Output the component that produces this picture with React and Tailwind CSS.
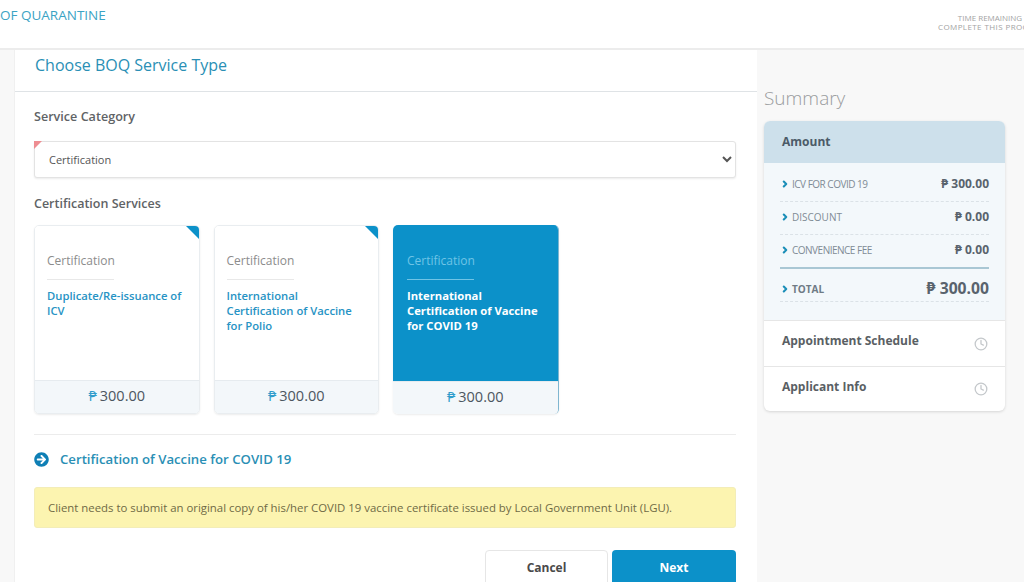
import React from 'react';
import { ChevronRight, Clock } from 'lucide-react';
import { FaArrowCircleRight } from 'react-icons/fa';

const font = "font-['Open_Sans','Noto_Sans',sans-serif]";

const services = [
  { id: 1, name: 'Duplicate/Re-issuance of ICV' },
  { id: 2, name: 'International Certification of Vaccine for Polio' },
  { id: 3, name: 'International Certification of Vaccine for COVID 19', active: true },
];

const ServiceCard = ({ name, active }) => (
  <div className={`relative w-[165.5px] h-[189px] flex flex-col rounded-[5px] overflow-hidden border border-[#e9edf0] ${active ? 'border-0 border-r border-r-[#7fb6d0]' : ''} shadow-[0_1px_2px_rgba(0,0,0,0.08)]`}>
    {!active && (
      <div className="absolute top-0 right-0 w-0 h-0 border-l-[13px] border-l-transparent border-t-[13px] border-t-[#0c91c9]" />
    )}
    <div className={`flex-1 ${active ? 'bg-[#0c91c9] pl-[14px] pr-[10px] pt-[28px]' : 'bg-white px-[12px] pt-[27px]'}`}>
      <p className={`text-[12px] leading-[16px] ${active ? 'text-[#6fc4e6]' : 'text-[#8c8c8c]'}`}>Certification</p>
      <div className={`w-[67px] h-px mt-[10px] mb-[8px] ${active ? 'bg-[#6fc4e6]' : 'bg-[#e8e8e8]'}`} />
      <p className={`text-[11.25px] leading-[15px] ${active ? 'font-bold text-white' : 'font-semibold text-[#2793c4]'}`}>{name}</p>
    </div>
    <div className="h-[33px] shrink-0 pb-[2px] flex items-center justify-center bg-[#f3f7fa] border-t border-[#e6ebef] text-[14.5px] text-[#4c5660]">
      <span className="text-[#2f9ccb] mr-[3px]">₱</span>300.00
    </div>
  </div>
);

const SummaryRow = ({ label, value, border = 'border-b border-dashed border-[#dbe2e7]', labelClass = 'text-[10px] tracking-[-0.5px] text-[#7f8b95]', valueClass = 'text-[12px]', rowClass = 'h-[33px] pb-[2px]' }) => (
  <div className={`flex items-center justify-between ${rowClass} ${border}`}>
    <div className="flex items-center gap-[2px]">
      <ChevronRight size={10} strokeWidth={5} className="text-[#1c8fb8]" />
      <span className={labelClass}>{label}</span>
    </div>
    <span className={`font-bold text-[#59636d] ${valueClass}`}>₱ {value}</span>
  </div>
);

export default function App() {
  return (
    <div className={`h-[582px] overflow-hidden bg-[#f8f8f8] ${font}`}>
      <header className="h-[50px] bg-white border-b-2 border-[#ececec] flex justify-between overflow-hidden">
        <span className="text-[13.5px] leading-[18px] mt-[6px] text-[#3ba3c4]">OF QUARANTINE</span>
        <div className="w-[104px] shrink-0 -mr-[18px] mt-[13px] text-center text-[8px] leading-[9px] text-[#a3a3a3]">
          <p>TIME REMAINING</p>
          <p className="whitespace-nowrap tracking-[0.4px]">COMPLETE THIS PROCESS</p>
        </div>
      </header>

      <div className="flex">
        <main className="w-[743px] ml-[14px] shrink-0 bg-white h-[532px] border-l border-[#f0f0f0]">
          <div className="h-[42px] border-b border-[#dfe3e6] pl-[20px] flex items-center">
            <h1 className="text-[16px] text-[#2a8fb5] pb-[11px]">Choose BOQ Service Type</h1>
          </div>

          <div className="pl-[19px] pr-[21px]">
            <h2 className="mt-[17px] text-[12.6px] leading-[16px] font-semibold text-[#5f6366]">Service Category</h2>
            <div className="relative mt-[16px]">
              <select defaultValue="Certification" className="w-full h-[37px] pl-[10px] pr-[4px] text-[11px] text-[#555] bg-white border border-[#e3e3e3] rounded-[3px] shadow-[0_1px_2px_rgba(0,0,0,0.08)]">
                <option>Certification</option>
              </select>
              <div className="absolute top-0 left-0 w-0 h-0 border-r-[8px] border-r-transparent border-t-[8px] border-t-[#ee8d92]" />
            </div>

            <h2 className="mt-[18px] text-[12.5px] leading-[16px] font-semibold text-[#5f6366]">Certification Services</h2>
            <div className="flex gap-[14px] mt-[13px]">
              {services.map(service => (
                <ServiceCard key={service.id} name={service.name} active={service.active} />
              ))}
            </div>

            <div className="mt-[20px] h-px bg-[#ececec]" />

            <div className="flex items-center gap-[11px] mt-[16px] h-[17px]">
              <FaArrowCircleRight size={15} className="text-[#0f7fb5]" />
              <h3 className="text-[13.2px] font-semibold text-[#2a8fb5]">Certification of Vaccine for COVID 19</h3>
            </div>

            <div className="mt-[19px] h-[41px] flex items-center px-[13px] bg-[#fcf4b0] border border-[#f3edb8] rounded-[3px] text-[11.4px] text-[#6f6a45]">
              Client needs to submit an original copy of his/her COVID 19 vaccine certificate issued by Local Government Unit (LGU).
            </div>

            <div className="flex justify-end gap-[4px] mt-[22px]">
              <button className="w-[123px] h-[50px] pb-[15px] bg-white border border-[#e6e6e6] rounded-[4px] text-[12px] font-bold text-[#4a4a4a]">Cancel</button>
              <button className="w-[124px] h-[50px] pb-[15px] bg-[#0c91c9] rounded-[4px] text-[12px] font-bold text-white">Next</button>
            </div>
          </div>
        </main>

        <aside className="flex-1 pl-[7px] pr-[19px]">
          <h2 className="mt-[34px] text-[19px] leading-[28px] font-light text-[#9a9c9e]">Summary</h2>
          <div className="mt-[9px] rounded-[6px] overflow-hidden bg-white shadow-[0_1px_3px_rgba(0,0,0,0.14)]">
            <div className="h-[42px] pl-[18px] flex items-center bg-[#cde0eb] text-[12px] font-bold text-[#4c5b68]">Amount</div>
            <div className="h-[157px] px-[16px] pt-[6px] bg-[#f3f8fb]">
              <SummaryRow label="ICV FOR COVID 19" value="300.00" />
              <SummaryRow label="DISCOUNT" value="0.00" labelClass="text-[10px] text-[#7f8b95]" />
              <SummaryRow label="CONVENIENCE FEE" value="0.00" border="border-b-2 border-[#a9c7d4]" rowClass="h-[34px] pb-[2px]" />
              <SummaryRow label="TOTAL" value="300.00" labelClass="text-[10px] font-bold text-[#6f7b85]" valueClass="text-[15.7px]" rowClass="h-[33px] pt-[8px]" />
            </div>
            <div className="h-[46px] px-[17px] flex items-center justify-between border-t border-[#e6e6e6] text-[12px] font-bold text-[#5a5f64]">
              <span className="pl-px mb-[6px]">Appointment Schedule</span>
              <Clock size={14} strokeWidth={2.2} className="text-[#c4c8cb]" />
            </div>
            <div className="h-[45px] px-[17px] flex items-center justify-between border-t border-[#e6e6e6] text-[12px] font-bold text-[#5a5f64]">
              <span className="pl-px mb-[5px]">Applicant Info</span>
              <Clock size={14} strokeWidth={2.2} className="text-[#c4c8cb]" />
            </div>
          </div>
        </aside>
      </div>
    </div>
  );
}
